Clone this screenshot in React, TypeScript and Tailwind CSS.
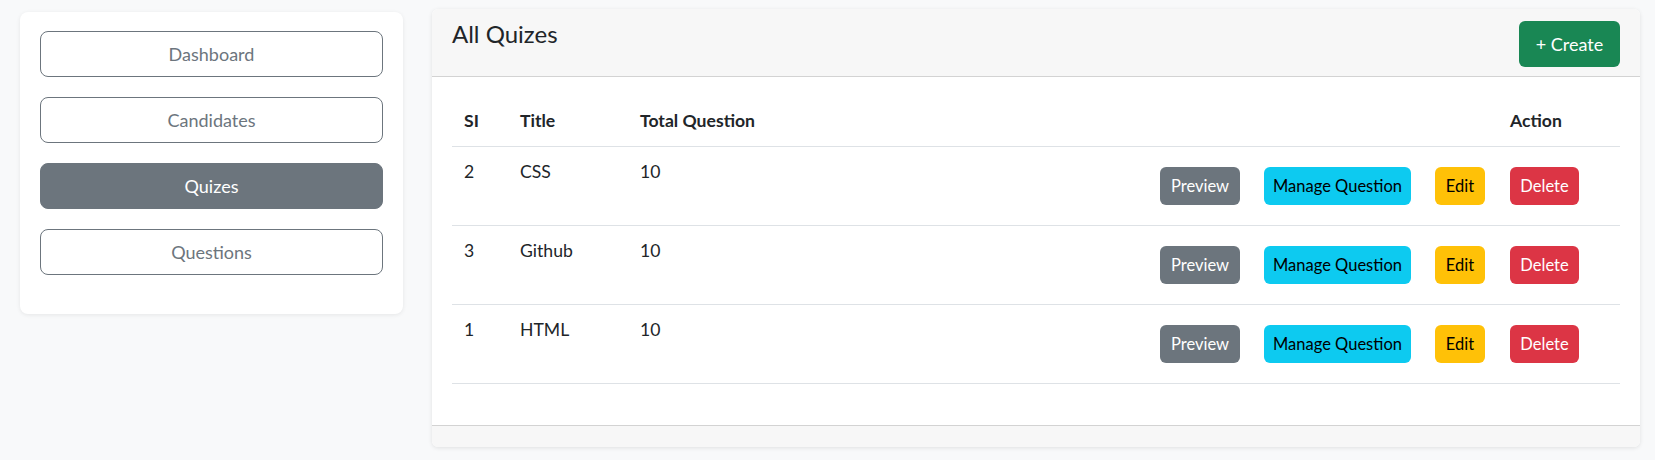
import React from "react"

const menu = ["Dashboard", "Candidates", "Quizes", "Questions"]

const quizzes = [
  { si: 2, title: "CSS", total: 10 },
  { si: 3, title: "Github", total: 10 },
  { si: 1, title: "HTML", total: 10 },
]

const cols = "grid grid-cols-[56px_120px_1fr_104px_171px_75px_122px]"

export default function App() {
  return (
    <div className="min-h-screen bg-[#f8f9fa] font-['Lato',sans-serif] text-[#212529]">
      <div className="flex items-start gap-[29px] pl-5 pr-[15px]">
        {/* Sidebar */}
        <aside className="mt-3 w-[383px] shrink-0 rounded-lg bg-white px-5 pt-[19px] pb-[39px] shadow-[0_1px_4px_rgba(0,0,0,0.08)]">
          <nav className="flex flex-col gap-5">
            {menu.map((item) => (
              <button
                key={item}
                className={
                  item === "Quizes"
                    ? "h-[46px] rounded-lg border border-[#6c757d] bg-[#6c757d] text-[18px] text-white"
                    : "h-[46px] rounded-lg border border-[#6c757d] bg-white text-[18px] text-[#6c757d]"
                }
              >
                {item}
              </button>
            ))}
          </nav>
        </aside>

        {/* Quiz list card */}
        <main className="mt-[9px] flex-1 overflow-hidden rounded-md bg-white shadow-[0_1px_4px_rgba(0,0,0,0.1)]">
          <div className="flex items-start justify-between border-b border-[#d3d3d3] bg-[#f7f7f7] px-5 pt-3 pb-[9px]">
            <h4 className="-mt-[2px] text-[24px] leading-[29px] font-normal">All Quizes</h4>
            <button className="h-[46px] w-[101px] rounded-md bg-[#198754] text-[18px] text-white">
              + Create
            </button>
          </div>

          <div className="px-5 pt-[19px] pb-[41px]">
            <div className={`${cols} border-b border-[#dee2e6] text-[17.6px] leading-[26px] font-bold`}>
              <div className="px-3 py-3">SI</div>
              <div className="px-3 py-3">Title</div>
              <div className="px-3 py-3">Total Question</div>
              <div />
              <div />
              <div />
              <div className="px-3 py-3">Action</div>
            </div>

            {quizzes.map((q) => (
              <div key={q.si} className={`${cols} border-b border-[#dee2e6] text-[17.6px] leading-[26.4px]`}>
                <div className="px-3 pt-3">{q.si}</div>
                <div className="px-3 pt-3">{q.title}</div>
                <div className="px-3 pt-3">{q.total}</div>
                <div className="flex items-center px-3 py-5">
                  <button className="h-[38px] w-[80px] rounded-md bg-[#6c757d] text-[16.5px] text-white">Preview</button>
                </div>
                <div className="flex items-center px-3 py-5">
                  <button className="h-[38px] w-[147px] rounded-md bg-[#0dcaf0] text-[16.5px] text-black">Manage Question</button>
                </div>
                <div className="flex items-center px-3 py-5">
                  <button className="h-[38px] w-[50px] rounded-md bg-[#ffc107] text-[16.5px] text-black">Edit</button>
                </div>
                <div className="flex items-center px-3 py-5">
                  <button className="h-[38px] w-[69px] rounded-md bg-[#dc3545] text-[16.5px] text-white">Delete</button>
                </div>
              </div>
            ))}
          </div>

          <div className="h-[22px] border-t border-[#d3d3d3] bg-[#f7f7f7]" />
        </main>
      </div>
    </div>
  )
}
